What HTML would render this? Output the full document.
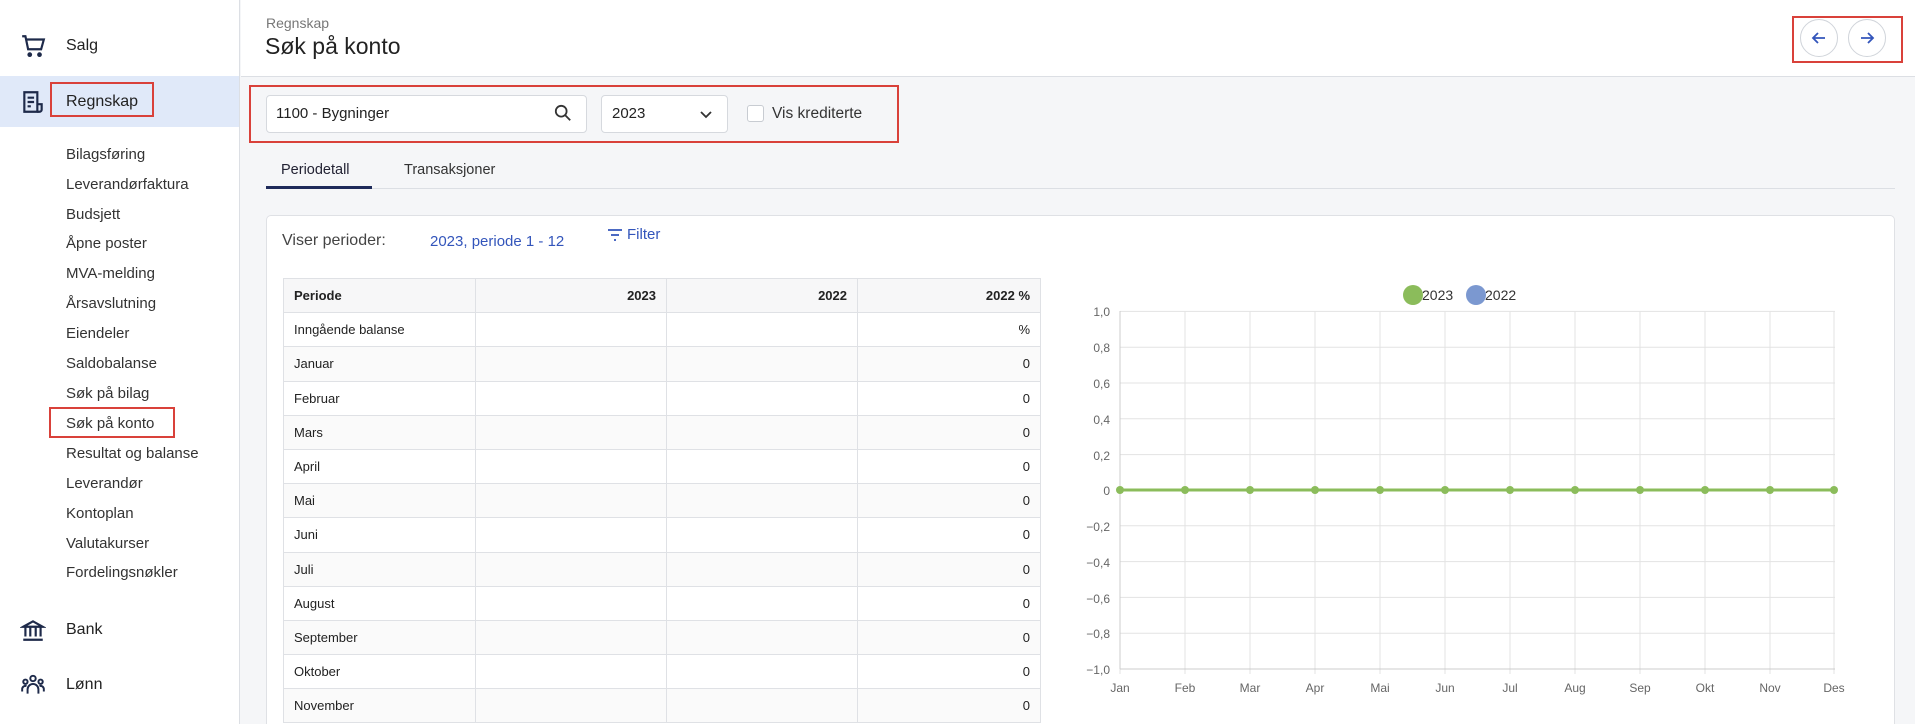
<!DOCTYPE html>
<html style="width:1915px;height:724px;overflow:hidden"><head><meta charset="utf-8"><style>
*{box-sizing:border-box;margin:0;padding:0}
body{width:1915px;height:724px;overflow:hidden;font-family:"Liberation Sans",sans-serif;color:#222;background:#f5f6f8;position:relative}
.abs{position:absolute}
#side{left:0;top:0;width:240px;height:724px;background:#fff;border-right:1px solid #dcdfe4}
.nav{position:absolute;left:66px;font-size:16px;color:#222}
.sub{position:absolute;left:66px;font-size:15px;color:#333}
#hdr{left:241px;top:0;width:1674px;height:77px;background:#fff;border-bottom:1px solid #dcdfe4}
.red{position:absolute;border:2px solid #d9413a}
.circ{position:absolute;width:38px;height:38px;border:1px solid #d0d4da;border-radius:50%;background:#fff}
#clip{position:absolute;left:0;top:0;width:1915px;height:724px;overflow:hidden}
table{border-collapse:collapse;position:absolute;left:283px;top:278px;width:757px;font-size:13px;table-layout:fixed}
td,th{border:1px solid #dfe1e5;height:34.2px;padding:0 10px;text-align:right;font-weight:normal}
th{font-weight:bold;background:#f7f7f8}
td:first-child,th:first-child{text-align:left}
tr:nth-child(odd) td{background:#fafafa}
</style></head><body><div id="clip">
<div class="abs" id="side">
  <svg class="abs" style="left:20px;top:33px" width="26" height="26" viewBox="0 0 24 24" fill="none" stroke="#1e2a4a" stroke-width="2"><path d="M2 3h3l2.5 12h12L22 6H6"/><circle cx="9" cy="20" r="1.2" fill="#1e2a4a"/><circle cx="18" cy="20" r="1.2" fill="#1e2a4a"/></svg>
  <div class="nav" style="top:37px">Salg</div>
  <div class="abs" style="left:0;top:76px;width:239px;height:51px;background:#e0e9f9"></div>
  <svg class="abs" style="left:20px;top:89px" width="26" height="26" viewBox="0 0 24 24" fill="none" stroke="#1e2a4a" stroke-width="2"><path d="M4 3h12v18H4z"/><path d="M7 8h6M7 12h6M7 16h3M16 14h4v5a2 2 0 0 1-2 2h-2"/></svg>
  <div class="nav" style="top:93px">Regnskap</div>
  <div class="red" style="left:50px;top:82px;width:104px;height:35px"></div>
  <div class="sub" style="top:146px">Bilagsføring</div>
  <div class="sub" style="top:176px">Leverandørfaktura</div>
  <div class="sub" style="top:206px">Budsjett</div>
  <div class="sub" style="top:235px">Åpne poster</div>
  <div class="sub" style="top:265px">MVA-melding</div>
  <div class="sub" style="top:295px">Årsavslutning</div>
  <div class="sub" style="top:325px">Eiendeler</div>
  <div class="sub" style="top:355px">Saldobalanse</div>
  <div class="sub" style="top:385px">Søk på bilag</div>
  <div class="sub" style="top:415px">Søk på konto</div>
  <div class="red" style="left:49px;top:407px;width:126px;height:31px"></div>
  <div class="sub" style="top:445px">Resultat og balanse</div>
  <div class="sub" style="top:475px">Leverandør</div>
  <div class="sub" style="top:505px">Kontoplan</div>
  <div class="sub" style="top:535px">Valutakurser</div>
  <div class="sub" style="top:564px">Fordelingsnøkler</div>
  <svg class="abs" style="left:20px;top:617px" width="26" height="26" viewBox="0 0 24 24" fill="none" stroke="#1e2a4a" stroke-width="2"><path d="M3 9l9-5 9 5zM5 10v8M9.5 10v8M14.5 10v8M19 10v8M3 21h18"/></svg>
  <div class="nav" style="top:621px">Bank</div>
  <svg class="abs" style="left:20px;top:672px" width="26" height="26" viewBox="0 0 24 24" fill="none" stroke="#1e2a4a" stroke-width="1.8"><circle cx="12" cy="6" r="2.5"/><circle cx="5" cy="9" r="2"/><circle cx="19" cy="9" r="2"/><path d="M7 20v-4a5 5 0 0 1 10 0v4M2 18v-2a3 3 0 0 1 4-3M22 18v-2a3 3 0 0 0-4-3"/></svg>
  <div class="nav" style="top:676px">Lønn</div>
</div>
<div class="abs" id="hdr"></div>
<div class="abs" style="left:266px;top:15px;font-size:14px;color:#777">Regnskap</div>
<div class="abs" style="left:265px;top:33px;font-size:23px;color:#222">Søk på konto</div>
<div class="circ" style="left:1800px;top:19px"></div>
<div class="circ" style="left:1848px;top:19px"></div>
<svg class="abs" style="left:1809px;top:28px" width="20" height="20" viewBox="0 0 20 20" fill="none" stroke="#3355bb" stroke-width="1.8"><path d="M16 10H4M9 5l-5 5 5 5"/></svg>
<svg class="abs" style="left:1857px;top:28px" width="20" height="20" viewBox="0 0 20 20" fill="none" stroke="#3355bb" stroke-width="1.8"><path d="M4 10h12M11 5l5 5-5 5"/></svg>
<div class="red" style="left:1792px;top:16px;width:111px;height:47px"></div>

<div class="abs" style="left:266px;top:95px;width:321px;height:38px;background:#fff;border:1px solid #d6d9de;border-radius:4px"></div>
<div class="abs" style="left:276px;top:105px;font-size:15px">1100 - Bygninger</div>
<svg class="abs" style="left:554px;top:104px" width="18" height="18" viewBox="0 0 20 20" fill="none" stroke="#333" stroke-width="2"><circle cx="8" cy="8" r="6"/><path d="M12.5 12.5L18 18"/></svg>
<div class="abs" style="left:601px;top:95px;width:127px;height:38px;background:#fff;border:1px solid #d6d9de;border-radius:4px"></div>
<div class="abs" style="left:612px;top:105px;font-size:15px">2023</div>
<svg class="abs" style="left:699px;top:107px" width="14" height="14" viewBox="0 0 14 14" fill="none" stroke="#333" stroke-width="1.8"><path d="M2 5l5 5 5-5"/></svg>
<div class="abs" style="left:747px;top:105px;width:17px;height:17px;border:1px solid #c8ccd2;border-radius:3px;background:#fff"></div>
<div class="abs" style="left:772px;top:105px;font-size:15.5px;color:#333">Vis krediterte</div>
<div class="red" style="left:249px;top:85px;width:650px;height:58px"></div>

<div class="abs" style="left:266px;top:188px;width:1629px;height:1px;background:#dcdfe4"></div>
<div class="abs" style="left:281px;top:162px;font-size:14.5px;color:#223">Periodetall</div>
<div class="abs" style="left:404px;top:162px;font-size:14.5px;color:#333">Transaksjoner</div>
<div class="abs" style="left:266px;top:186px;width:106px;height:3px;background:#1e2a5a"></div>

<div class="abs" style="left:266px;top:215px;width:1629px;height:509px;background:#fff;border:1px solid #dfe1e5;border-bottom:none;border-radius:5px 5px 0 0"></div>
<div class="abs" style="left:282px;top:232px;font-size:16px;color:#444">Viser perioder:</div>
<div class="abs" style="left:430px;top:233px;font-size:15px;color:#3355bb">2023, periode 1 - 12</div>
<svg class="abs" style="left:607px;top:227px" width="16" height="16" viewBox="0 0 16 16" stroke="#3355bb" stroke-width="1.8"><path d="M1 3h14M4 8h8M7 13h2"/></svg>
<div class="abs" style="left:627px;top:226px;font-size:15px;color:#3355bb">Filter</div>

<table>
<colgroup><col style="width:192px"><col style="width:191px"><col style="width:191px"><col style="width:183px"></colgroup>
<tr><th>Periode</th><th>2023</th><th>2022</th><th>2022 %</th></tr>
<tr><td>Inngående balanse</td><td></td><td></td><td>%</td></tr>
<tr><td>Januar</td><td></td><td></td><td>0</td></tr>
<tr><td>Februar</td><td></td><td></td><td>0</td></tr>
<tr><td>Mars</td><td></td><td></td><td>0</td></tr>
<tr><td>April</td><td></td><td></td><td>0</td></tr>
<tr><td>Mai</td><td></td><td></td><td>0</td></tr>
<tr><td>Juni</td><td></td><td></td><td>0</td></tr>
<tr><td>Juli</td><td></td><td></td><td>0</td></tr>
<tr><td>August</td><td></td><td></td><td>0</td></tr>
<tr><td>September</td><td></td><td></td><td>0</td></tr>
<tr><td>Oktober</td><td></td><td></td><td>0</td></tr>
<tr><td>November</td><td></td><td></td><td>0</td></tr>
</table>

<svg class="abs" style="left:1050px;top:260px" width="860" height="464" font-family="Liberation Sans, sans-serif" font-size="12" fill="#666">
<circle cx="363" cy="35" r="10" fill="#8bbc5b"/><text x="372" y="40" font-size="14" fill="#333">2023</text>
<circle cx="426" cy="35" r="10" fill="#7b98d0"/><text x="435" y="40" font-size="14" fill="#333">2022</text>
<g stroke="#e3e3e3" stroke-width="1">
<line x1="70" y1="51.4" x2="785" y2="51.4"/><line x1="70" y1="87.2" x2="785" y2="87.2"/><line x1="70" y1="123" x2="785" y2="123"/><line x1="70" y1="158.8" x2="785" y2="158.8"/><line x1="70" y1="194.6" x2="785" y2="194.6"/><line x1="70" y1="230" x2="785" y2="230"/><line x1="70" y1="265.8" x2="785" y2="265.8"/><line x1="70" y1="301.6" x2="785" y2="301.6"/><line x1="70" y1="337.4" x2="785" y2="337.4"/><line x1="70" y1="373.2" x2="785" y2="373.2"/><line x1="70" y1="409" x2="785" y2="409"/>
<line x1="70" y1="51" x2="70" y2="414"/><line x1="135" y1="51" x2="135" y2="414"/><line x1="200" y1="51" x2="200" y2="414"/><line x1="265" y1="51" x2="265" y2="414"/><line x1="330" y1="51" x2="330" y2="414"/><line x1="395" y1="51" x2="395" y2="414"/><line x1="460" y1="51" x2="460" y2="414"/><line x1="525" y1="51" x2="525" y2="414"/><line x1="590" y1="51" x2="590" y2="414"/><line x1="655" y1="51" x2="655" y2="414"/><line x1="720" y1="51" x2="720" y2="414"/><line x1="784" y1="51" x2="784" y2="414"/>
</g>
<line x1="70" y1="51" x2="70" y2="409" stroke="#ccc"/><line x1="70" y1="409" x2="785" y2="409" stroke="#ccc"/>
<g text-anchor="end">
<text x="60" y="56">1,0</text><text x="60" y="92">0,8</text><text x="60" y="128">0,6</text><text x="60" y="164">0,4</text><text x="60" y="200">0,2</text><text x="60" y="235">0</text><text x="60" y="271">−0,2</text><text x="60" y="307">−0,4</text><text x="60" y="343">−0,6</text><text x="60" y="378">−0,8</text><text x="60" y="414">−1,0</text>
</g>
<g text-anchor="middle">
<text x="70" y="432">Jan</text><text x="135" y="432">Feb</text><text x="200" y="432">Mar</text><text x="265" y="432">Apr</text><text x="330" y="432">Mai</text><text x="395" y="432">Jun</text><text x="460" y="432">Jul</text><text x="525" y="432">Aug</text><text x="590" y="432">Sep</text><text x="655" y="432">Okt</text><text x="720" y="432">Nov</text><text x="784" y="432">Des</text>
</g>
<line x1="70" y1="230" x2="784" y2="230" stroke="#8bbc5b" stroke-width="3"/>
<g fill="#8bbc5b">
<circle cx="70" cy="230" r="4"/><circle cx="135" cy="230" r="4"/><circle cx="200" cy="230" r="4"/><circle cx="265" cy="230" r="4"/><circle cx="330" cy="230" r="4"/><circle cx="395" cy="230" r="4"/><circle cx="460" cy="230" r="4"/><circle cx="525" cy="230" r="4"/><circle cx="590" cy="230" r="4"/><circle cx="655" cy="230" r="4"/><circle cx="720" cy="230" r="4"/><circle cx="784" cy="230" r="4"/>
</g>
</svg>
</div></body></html>
